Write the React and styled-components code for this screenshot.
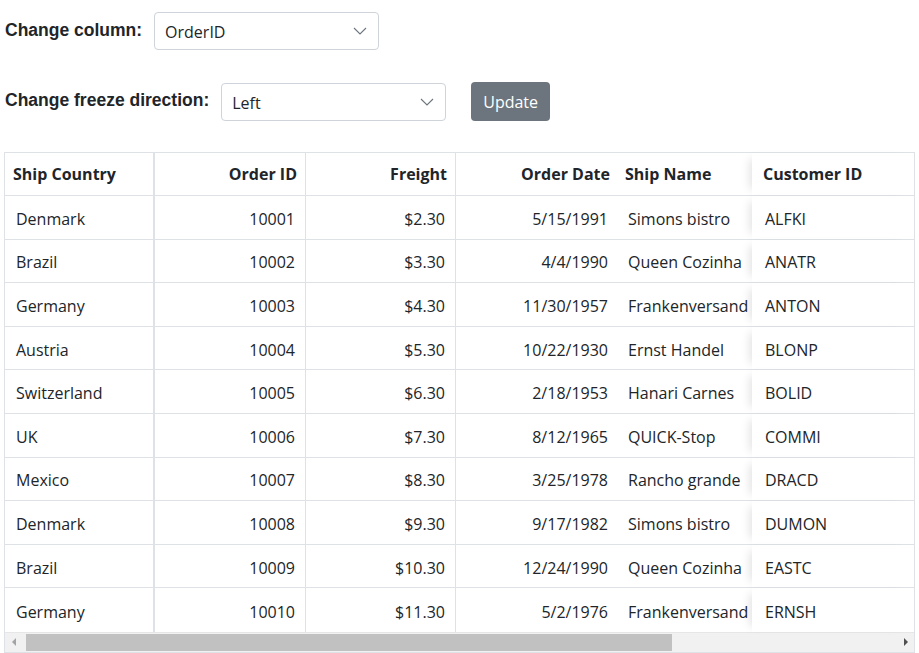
import React from 'react';
import styled, { createGlobalStyle } from 'styled-components';

const columns = [
  { key: 'country', title: 'Ship Country', align: 'left' },
  { key: 'id', title: 'Order ID', align: 'right' },
  { key: 'freight', title: 'Freight', align: 'right' },
  { key: 'date', title: 'Order Date', align: 'right' },
  { key: 'name', title: 'Ship Name', align: 'left' },
  { key: 'customer', title: 'Customer ID', align: 'left' },
];

const orders = [
  ['Denmark', '10001', '$2.30', '5/15/1991', 'Simons bistro', 'ALFKI'],
  ['Brazil', '10002', '$3.30', '4/4/1990', 'Queen Cozinha', 'ANATR'],
  ['Germany', '10003', '$4.30', '11/30/1957', 'Frankenversand', 'ANTON'],
  ['Austria', '10004', '$5.30', '10/22/1930', 'Ernst Handel', 'BLONP'],
  ['Switzerland', '10005', '$6.30', '2/18/1953', 'Hanari Carnes', 'BOLID'],
  ['UK', '10006', '$7.30', '8/12/1965', 'QUICK-Stop', 'COMMI'],
  ['Mexico', '10007', '$8.30', '3/25/1978', 'Rancho grande', 'DRACD'],
  ['Denmark', '10008', '$9.30', '9/17/1982', 'Simons bistro', 'DUMON'],
  ['Brazil', '10009', '$10.30', '12/24/1990', 'Queen Cozinha', 'EASTC'],
  ['Germany', '10010', '$11.30', '5/2/1976', 'Frankenversand', 'ERNSH'],
];

const Chevron = () => (
  <ChevronIcon width="14" height="8" viewBox="0 0 14 8">
    <path d="M1 1l6 6 6-6" fill="none" stroke="#6c757d" strokeWidth="1.1" />
  </ChevronIcon>
);

const Dropdown = ({ value }) => (
  <SelectBox>
    <Select defaultValue={value}>
      <option>{value}</option>
    </Select>
    <Chevron />
  </SelectBox>
);

const App = () => {
  return (
    <Page>
      <GlobalStyle />
      <Controls>
        <ControlRow>
          <Label>Change column:</Label>
          <Dropdown value="OrderID" />
        </ControlRow>
        <ControlRow>
          <Label>Change freeze direction:</Label>
          <Dropdown value="Left" />
          <UpdateButton>Update</UpdateButton>
        </ControlRow>
      </Controls>

      <Grid>
        <HeaderRow>
          {columns.map((col, i) => (
            <HeaderCell key={col.key} $align={col.align} $col={i}>
              {col.title}
            </HeaderCell>
          ))}
        </HeaderRow>
        {orders.map((row) => (
          <Row key={row[1]}>
            {row.map((value, i) => (
              <Cell key={i} $align={columns[i].align} $col={i}>
                {value}
              </Cell>
            ))}
          </Row>
        ))}
        <ScrollBar>
          <ScrollButton>
            <Arrow $dir="left" />
          </ScrollButton>
          <Track>
            <Thumb />
          </Track>
          <ScrollButton>
            <Arrow $dir="right" />
          </ScrollButton>
        </ScrollBar>
      </Grid>
    </Page>
  );
};

export default App;

const GlobalStyle = createGlobalStyle`
  body {
    margin: 0;
    background: #fff;
    font-family: "Open Sans", "Noto Sans", sans-serif;
    color: #212529;
  }
`;

const Page = styled.div`
  padding: 12px 4px 0 4px;
  width: 911px;
`;

const Controls = styled.div`
  display: flex;
  flex-direction: column;
  gap: 32px;
  margin-bottom: 31px;
`;

const ControlRow = styled.div`
  display: flex;
  align-items: center;
`;

const Label = styled.label`
  font-family: "Liberation Sans", Arial, sans-serif;
  font-weight: 700;
  font-size: 17.5px;
  color: #212529;
  margin: 0 12px 2px 1px;
`;

const SelectBox = styled.div`
  position: relative;
  width: 225px;
  height: 38px;
`;

const Select = styled.select`
  appearance: none;
  width: 100%;
  height: 100%;
  box-sizing: border-box;
  border: 1px solid #ced4da;
  border-radius: 4px;
  background: #fff;
  padding: 2px 36px 0 10px;
  font-family: "Open Sans", "Noto Sans", sans-serif;
  font-size: 16px;
  color: #212529;
  outline: none;
`;

const ChevronIcon = styled.svg`
  position: absolute;
  right: 12px;
  top: 15px;
  pointer-events: none;
`;

const UpdateButton = styled.button`
  margin-left: 25px;
  height: 39px;
  padding: 0 12px;
  border: none;
  border-radius: 4px;
  background: #6c757d;
  color: #fff;
  font-family: "Open Sans", "Noto Sans", sans-serif;
  font-size: 16px;
`;

const Grid = styled.div`
  border: 1px solid #dee2e6;
  border-bottom: none;
  background: #fff;
`;

const gridColumns = '150px 151px 150px 162px 134px 1fr';

const HeaderRow = styled.div`
  display: grid;
  grid-template-columns: ${gridColumns};
  height: 43px;
  border-bottom: 1px solid #dee2e6;
  box-sizing: border-box;
`;

const Row = styled.div`
  display: grid;
  grid-template-columns: ${gridColumns};
  height: 43.6px;
  border-bottom: 1px solid #dee2e6;
  box-sizing: border-box;

  &:nth-last-child(2) {
    border-bottom: none;
  }
`;

const cellBorder = (col) => {
  if (col === 0) return 'border-right: 2px solid #dee2e6;';
  if (col === 1 || col === 2) return 'border-right: 1px solid #dee2e6;';
  return '';
};

const frozenRight = (col) =>
  col === 5
    ? `
    position: relative;
    background: #fff;
    box-shadow: -8px 0 9px -6px rgba(0, 0, 0, 0.12);
  `
    : '';

const HeaderCell = styled.div`
  display: flex;
  align-items: center;
  justify-content: ${(p) => (p.$align === 'right' ? 'flex-end' : 'flex-start')};
  padding: 0 8px 1px;
  font-size: 16px;
  font-weight: 700;
  color: #212529;
  white-space: nowrap;
  overflow: hidden;
  ${(p) => cellBorder(p.$col)}
  ${(p) => frozenRight(p.$col)}
  ${(p) => (p.$col === 4 ? 'padding-left: 7px;' : '')}
  ${(p) => (p.$col === 5 ? 'padding-left: 11px;' : '')}
`;

const Cell = styled.div`
  display: flex;
  align-items: center;
  justify-content: ${(p) => (p.$align === 'right' ? 'flex-end' : 'flex-start')};
  padding: 3px 10px 0;
  font-size: 16px;
  color: #212529;
  white-space: nowrap;
  ${(p) => cellBorder(p.$col)}
  ${(p) => frozenRight(p.$col)}
  ${(p) => (p.$col === 0 ? 'padding-left: 11px;' : '')}
  ${(p) => (p.$col === 5 ? 'padding-left: 13px;' : '')}
`;

const ScrollBar = styled.div`
  display: flex;
  height: 19px;
  background: #f1f1f1;
  border-top: 1px solid #e6e6e6;
  border-bottom: 1px solid #dee2e6;
`;

const ScrollButton = styled.div`
  width: 17px;
  display: flex;
  align-items: center;
  justify-content: center;
`;

const Arrow = styled.div`
  width: 0;
  height: 0;
  border-top: 4px solid transparent;
  border-bottom: 4px solid transparent;
  ${(p) =>
    p.$dir === 'left'
      ? 'border-right: 4px solid #a3a3a3;'
      : 'border-left: 4px solid #505050;'}
`;

const Track = styled.div`
  flex: 1;
  display: flex;
  align-items: stretch;
  padding: 1px 0 1px 4px;
`;

const Thumb = styled.div`
  width: 646px;
  background: #c1c1c1;
`;
